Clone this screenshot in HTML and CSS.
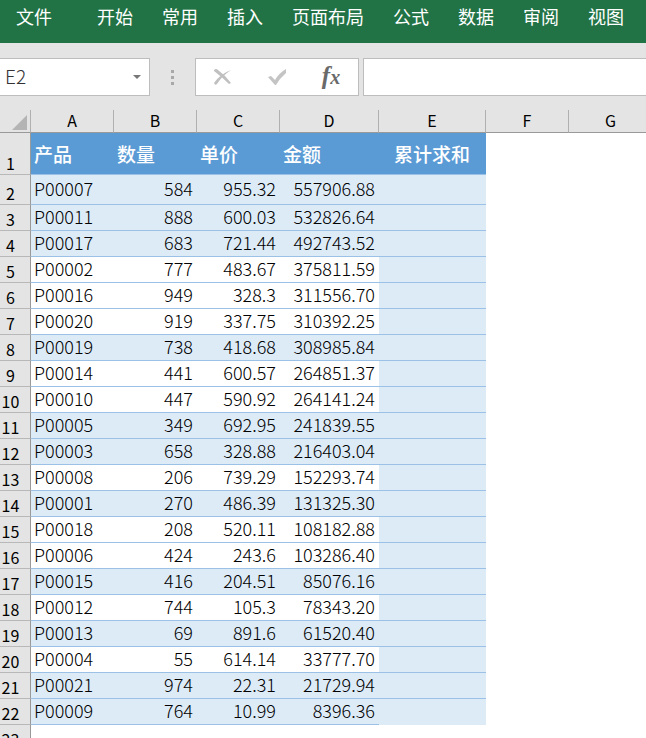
FILE: index.html
```html
<!DOCTYPE html>
<html lang="zh-CN">
<head>
    <meta charset="UTF-8">
    <meta name="viewport" content="width=device-width, initial-scale=1.0">
    <title>累计求和</title>
    <link rel="stylesheet" href="styles.css">
</head>
<body>
    <nav class="ribbon">
        <a href="#">文件</a>
        <a href="#">开始</a>
        <a href="#">常用</a>
        <a href="#">插入</a>
        <a href="#">页面布局</a>
        <a href="#">公式</a>
        <a href="#">数据</a>
        <a href="#">审阅</a>
        <a href="#">视图</a>
    </nav>

    <div class="formula-bar">
        <div class="name-box">
            <input type="text" value="E2" aria-label="名称框">
            <button type="button" aria-label="展开">
                <svg width="8" height="4" viewBox="0 0 8 4"><path d="M0 0h8L4 4z" fill="#777"/></svg>
            </button>
        </div>
        <div class="grip"><i></i><i></i><i></i></div>
        <div class="tools">
            <button type="button" aria-label="取消">
                <svg width="20" height="18" viewBox="0 0 20 18" fill="#c0c0c0"><path d="M1 2Q3 0 5 2Q12 7 18 15L16 16Q9 9 1 3z"/><path d="M18 2Q9 8 4 16Q2 18 1 15Q7 6 18 2z"/></svg>
            </button>
            <button type="button" aria-label="输入">
                <svg width="20" height="18" viewBox="0 0 20 18"><path d="M1 9l3-1 4 4Q12 5 19 1v4Q13 10 9 17H8z" fill="#c4c4c4"/></svg>
            </button>
            <button type="button" class="fx" aria-label="插入函数">f<span>x</span></button>
        </div>
        <input type="text" class="formula" aria-label="编辑栏">
    </div>

    <table class="sheet">
        <colgroup>
            <col class="w-num"><col class="w-std"><col class="w-std"><col class="w-std"><col class="w-amount"><col class="w-sum"><col class="w-std"><col class="w-std">
        </colgroup>
        <thead>
            <tr>
                <th><svg width="15" height="15" viewBox="0 0 15 15"><path d="M15 0v15H0z" fill="#b4b4b4"/></svg></th>
                <th>A</th><th>B</th><th>C</th><th>D</th><th>E</th><th>F</th><th>G</th>
            </tr>
        </thead>
        <tbody id="rows">
            <tr class="title"><th>1</th><td>产品</td><td>数量</td><td>单价</td><td>金额</td><td>累计求和</td><td></td><td></td></tr>
        </tbody>
    </table>

    <script src="script.js"></script>
</body>
</html>
```
FILE: styles.css
```css
* {
    box-sizing: border-box;
}
body {
    margin: 0;
    height: 100vh;
    overflow: hidden;
    background-color: #fff;
    font-family: "Noto Sans CJK SC", sans-serif;
}
.ribbon {
    display: flex;
    gap: 29px;
    height: 43px;
    padding: 3px 16px;
    background-color: #217346;
}
.ribbon a {
    color: #fff;
    font-size: 18px;
    line-height: 26px;
    text-decoration: none;
    white-space: nowrap;
}
.ribbon a:first-child {
    margin-right: 16px;
}
.formula-bar {
    display: flex;
    height: 67px;
    padding: 15px 0 14px;
    background-color: #e4e4e4;
}
.formula-bar input {
    border: none;
    outline: none;
    padding: 0;
    background: none;
    font: 300 19px "Noto Sans CJK SC", sans-serif;
    color: #333;
}
.formula-bar button {
    display: flex;
    align-items: center;
    justify-content: center;
    border: none;
    padding: 0;
    background: none;
}
.name-box {
    display: flex;
    width: 150px;
    border: 1px solid #bdbdbd;
    border-left: none;
    background-color: #fff;
}
.formula-bar .name-box input {
    flex: 1;
    min-width: 0;
    padding: 0 0 4px 5px;
}
.name-box button {
    width: 24px;
}
.grip {
    display: flex;
    flex-direction: column;
    align-items: center;
    justify-content: center;
    gap: 3px;
    width: 45px;
}
.grip i {
    width: 3px;
    height: 3px;
    background-color: #a8a8a8;
}
.tools {
    display: flex;
    width: 164px;
    border: 1px solid #bdbdbd;
    background-color: #fff;
}
.tools button {
    flex: 1;
}
.tools .fx {
    align-items: baseline;
    padding-top: 3px;
    color: #6a6a6a;
    font: italic bold 25px "Liberation Serif", serif;
}
.fx span {
    font-size: 20px;
}
.formula-bar .formula {
    flex: 1;
    min-width: 0;
    margin-left: 4px;
    padding: 0 8px;
    border: 1px solid #bdbdbd;
    border-right: none;
    background-color: #fff;
}
.sheet {
    width: 100%;
    table-layout: fixed;
    border-collapse: separate;
    border-spacing: 0;
}
.w-num {
    width: 31px;
}
.w-std {
    width: 83px;
}
.w-amount {
    width: 99px;
}
.w-sum {
    width: 107px;
}
.sheet th {
    padding: 0;
    background-color: #e4e4e4;
    font-size: 16px;
    font-weight: 400;
    line-height: 20px;
    color: #000;
}
.sheet thead th {
    height: 23px;
    padding-bottom: 2px;
    border-right: 1px solid #b0b0b0;
    border-bottom: 1px solid #999;
}
.sheet thead th:first-child {
    padding: 2px 0 0 12px;
}
.sheet thead th:last-child {
    border-right: none;
}
.sheet thead svg {
    display: block;
}
.sheet tbody th {
    height: 26px;
    padding: 0 9px 1px 0;
    border-right: 1px solid #999;
    border-bottom: 1px solid #b8b8b8;
    vertical-align: bottom;
}
.sheet td {
    padding: 0 4px 4px 3px;
    font-size: 18px;
    font-weight: 300;
    line-height: 20px;
    text-align: right;
    white-space: nowrap;
    color: #000;
}
.sheet td:nth-child(2) {
    text-align: left;
}
.sheet td:nth-child(-n+6) {
    border-bottom: 1px solid #9bc2e6;
}
.sheet .band td:nth-child(-n+6),
.sheet td:nth-child(6) {
    background-color: #ddebf7;
}
.sheet .title th {
    height: 42px;
}
.sheet .title td {
    padding-bottom: 0;
    font-size: 19px;
    font-weight: 500;
    text-align: left;
    color: #fff;
}
.sheet .title td:nth-child(-n+6) {
    background-color: #5b9bd5;
}
.sheet .title td:nth-child(6) {
    text-align: center;
}
.sheet .first th {
    height: 30px;
}
.sheet .last td:nth-child(6) {
    border-bottom-color: #ddebf7;
}
.sheet .empty td:nth-child(n) {
    border: none;
    background: none;
}
```
FILE: script.js
```js
// product, quantity, price, amount, shaded row
const data = [
    ['P00007', '584', '955.32', '557906.88', 1],
    ['P00011', '888', '600.03', '532826.64', 1],
    ['P00017', '683', '721.44', '492743.52', 1],
    ['P00002', '777', '483.67', '375811.59', 0],
    ['P00016', '949', '328.3', '311556.70', 0],
    ['P00020', '919', '337.75', '310392.25', 0],
    ['P00019', '738', '418.68', '308985.84', 1],
    ['P00014', '441', '600.57', '264851.37', 0],
    ['P00010', '447', '590.92', '264141.24', 0],
    ['P00005', '349', '692.95', '241839.55', 1],
    ['P00003', '658', '328.88', '216403.04', 1],
    ['P00008', '206', '739.29', '152293.74', 0],
    ['P00001', '270', '486.39', '131325.30', 1],
    ['P00018', '208', '520.11', '108182.88', 0],
    ['P00006', '424', '243.6', '103286.40', 0],
    ['P00015', '416', '204.51', '85076.16', 1],
    ['P00012', '744', '105.3', '78343.20', 0],
    ['P00013', '69', '891.6', '61520.40', 1],
    ['P00004', '55', '614.14', '33777.70', 0],
    ['P00021', '974', '22.31', '21729.94', 1],
    ['P00009', '764', '10.99', '8396.36', 1],
    ['', '', '', '', 0]
];

const rows = document.getElementById('rows');
data.forEach(function(item, i) {
    const tr = document.createElement('tr');
    if (item[4]) tr.classList.add('band');
    if (i === 0) tr.classList.add('first');
    if (i === data.length - 2) tr.classList.add('last');
    if (!item[0]) tr.classList.add('empty');
    tr.innerHTML = `<th>${i + 2}</th>` + item.slice(0, 4).map(v => `<td>${v}</td>`).join('') + '<td></td><td></td><td></td>';
    rows.appendChild(tr);
});
```
